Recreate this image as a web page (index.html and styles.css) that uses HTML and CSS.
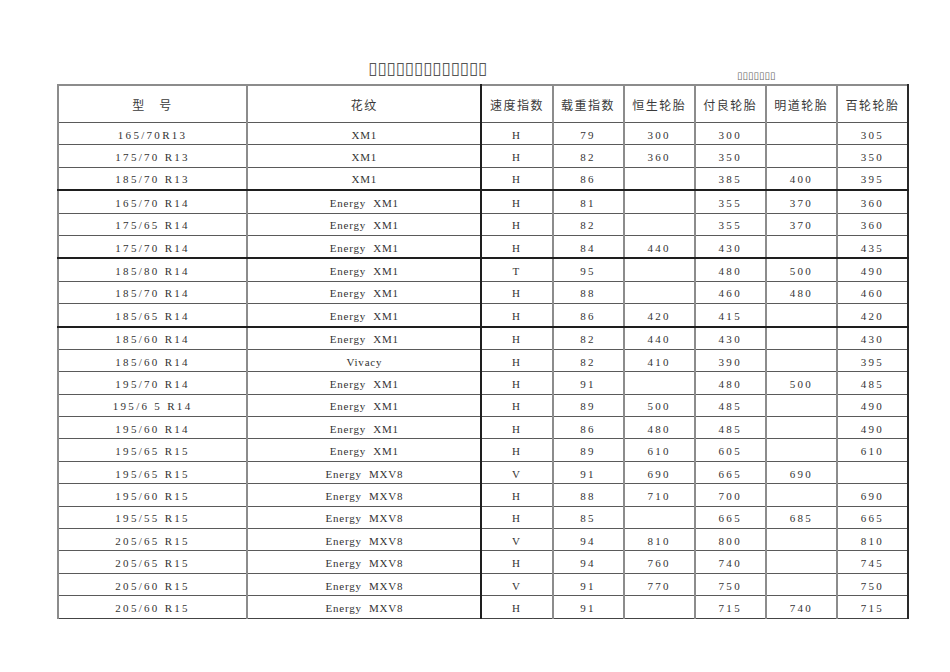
FILE: index.html
```html
<!DOCTYPE html>
<html lang="zh">
<head>
<meta charset="utf-8">
<title>轮胎价格表</title>
<link rel="stylesheet" href="styles.css">
</head>
<body>
<div class="page">
  <div class="head">
    <h1 class="title">▯▯▯▯▯▯▯▯▯▯▯▯▯</h1>
    <span class="note">▯▯▯▯▯▯▯</span>
  </div>
  <table class="grid">
    <colgroup>
      <col class="c-model"><col class="c-pat"><col class="c-n"><col class="c-n"><col class="c-n"><col class="c-n"><col class="c-n"><col class="c-n">
    </colgroup>
    <thead>
      <tr>
        <th>型　号</th><th>花纹</th><th class="dark-l">速度指数</th><th>载重指数</th><th>恒生轮胎</th><th>付良轮胎</th><th>明道轮胎</th><th>百轮轮胎</th>
      </tr>
    </thead>
    <tbody>
      <tr><td>165/70R13</td><td class="pat">XM1</td><td class="dark-l">H</td><td>79</td><td>300</td><td>300</td><td></td><td>305</td></tr>
      <tr><td>175/70 R13</td><td class="pat">XM1</td><td class="dark-l">H</td><td>82</td><td>360</td><td>350</td><td></td><td>350</td></tr>
      <tr class="thick"><td>185/70 R13</td><td class="pat">XM1</td><td class="dark-l">H</td><td>86</td><td></td><td>385</td><td>400</td><td>395</td></tr>
      <tr><td>165/70 R14</td><td class="pat">Energy&nbsp;&nbsp;XM1</td><td class="dark-l">H</td><td>81</td><td></td><td>355</td><td>370</td><td>360</td></tr>
      <tr><td>175/65 R14</td><td class="pat">Energy&nbsp;&nbsp;XM1</td><td class="dark-l">H</td><td>82</td><td></td><td>355</td><td>370</td><td>360</td></tr>
      <tr class="thick"><td>175/70 R14</td><td class="pat">Energy&nbsp;&nbsp;XM1</td><td class="dark-l">H</td><td>84</td><td>440</td><td>430</td><td></td><td>435</td></tr>
      <tr><td>185/80 R14</td><td class="pat">Energy&nbsp;&nbsp;XM1</td><td class="dark-l">T</td><td>95</td><td></td><td>480</td><td>500</td><td>490</td></tr>
      <tr><td>185/70 R14</td><td class="pat">Energy&nbsp;&nbsp;XM1</td><td class="dark-l">H</td><td>88</td><td></td><td>460</td><td>480</td><td>460</td></tr>
      <tr class="thick"><td>185/65 R14</td><td class="pat">Energy&nbsp;&nbsp;XM1</td><td class="dark-l">H</td><td>86</td><td>420</td><td>415</td><td></td><td>420</td></tr>
      <tr><td>185/60 R14</td><td class="pat">Energy&nbsp;&nbsp;XM1</td><td class="dark-l">H</td><td>82</td><td>440</td><td>430</td><td></td><td>430</td></tr>
      <tr><td>185/60 R14</td><td class="pat">Vivacy</td><td class="dark-l">H</td><td>82</td><td>410</td><td>390</td><td></td><td>395</td></tr>
      <tr><td>195/70 R14</td><td class="pat">Energy&nbsp;&nbsp;XM1</td><td class="dark-l">H</td><td>91</td><td></td><td>480</td><td>500</td><td>485</td></tr>
      <tr><td>195/6 5 R14</td><td class="pat">Energy&nbsp;&nbsp;XM1</td><td class="dark-l">H</td><td>89</td><td>500</td><td>485</td><td></td><td>490</td></tr>
      <tr><td>195/60 R14</td><td class="pat">Energy&nbsp;&nbsp;XM1</td><td class="dark-l">H</td><td>86</td><td>480</td><td>485</td><td></td><td>490</td></tr>
      <tr><td>195/65 R15</td><td class="pat">Energy&nbsp;&nbsp;XM1</td><td class="dark-l">H</td><td>89</td><td>610</td><td>605</td><td></td><td>610</td></tr>
      <tr><td>195/65 R15</td><td class="pat">Energy&nbsp;&nbsp;MXV8</td><td class="dark-l">V</td><td>91</td><td>690</td><td>665</td><td>690</td><td></td></tr>
      <tr><td>195/60 R15</td><td class="pat">Energy&nbsp;&nbsp;MXV8</td><td class="dark-l">H</td><td>88</td><td>710</td><td>700</td><td></td><td>690</td></tr>
      <tr><td>195/55 R15</td><td class="pat">Energy&nbsp;&nbsp;MXV8</td><td class="dark-l">H</td><td>85</td><td></td><td>665</td><td>685</td><td>665</td></tr>
      <tr><td>205/65 R15</td><td class="pat">Energy&nbsp;&nbsp;MXV8</td><td class="dark-l">V</td><td>94</td><td>810</td><td>800</td><td></td><td>810</td></tr>
      <tr><td>205/65 R15</td><td class="pat">Energy&nbsp;&nbsp;MXV8</td><td class="dark-l">H</td><td>94</td><td>760</td><td>740</td><td></td><td>745</td></tr>
      <tr><td>205/60 R15</td><td class="pat">Energy&nbsp;&nbsp;MXV8</td><td class="dark-l">V</td><td>91</td><td>770</td><td>750</td><td></td><td>750</td></tr>
      <tr><td>205/60 R15</td><td class="pat">Energy&nbsp;&nbsp;MXV8</td><td class="dark-l">H</td><td>91</td><td></td><td>715</td><td>740</td><td>715</td></tr>
    </tbody>
  </table>
</div>
</body>
</html>
```

FILE: styles.css
```css
html, body {
  margin: 0;
  padding: 0;
  background: #ffffff;
}

.page {
  width: 950px;
  padding-top: 56px;
  color: #2a2a2a;
}

.head {
  display: flex;
  align-items: flex-end;
  height: 28px;
}

.title {
  margin: 0 0 6px 368px;
  font-family: "DejaVu Sans", sans-serif;
  font-weight: normal;
  font-size: 17px;
  line-height: 20px;
  letter-spacing: -0.2px;
  color: #555;
}

.note {
  margin: 0 0 3px 0;
  padding-left: 250px;
  font-family: "DejaVu Sans", sans-serif;
  font-size: 10px;
  line-height: 11px;
  letter-spacing: 0;
  color: #666;
}

.grid {
  margin-left: 57px;
  width: 852px;
  table-layout: fixed;
  border-collapse: collapse;
  border-top: 2px solid #8c8c8c;
  border-left: 2px solid #8c8c8c;
  border-right: 2px solid #2a2a2a;
  border-bottom: 1px solid #444;
}

.c-model { width: 189px; }
.c-pat { width: 234px; }
.c-n { width: 71px; }

.grid th,
.grid td {
  padding: 0;
  text-align: center;
  border-left: 2px solid #8c8c8c;
  border-top: 1px solid #5a5a5a;
  white-space: nowrap;
  overflow: hidden;
}

.grid th {
  height: 36px;
  font-family: "Noto Sans CJK SC", sans-serif;
  font-weight: normal;
  font-size: 12px;
  letter-spacing: 1.5px;
  color: #3a3a3a;
}

.grid td {
  height: 19.4px;
  font-family: "Liberation Serif", serif;
  font-size: 11px;
  letter-spacing: 2.3px;
  line-height: 12px;
  padding-top: 2px;
  color: #333;
}

.grid td.pat {
  letter-spacing: 0.8px;
}

.grid .dark-l {
  border-left: 2px solid #1e1e1e;
}

.grid tr.thick td {
  border-bottom: 2px solid #1e1e1e;
}
```
